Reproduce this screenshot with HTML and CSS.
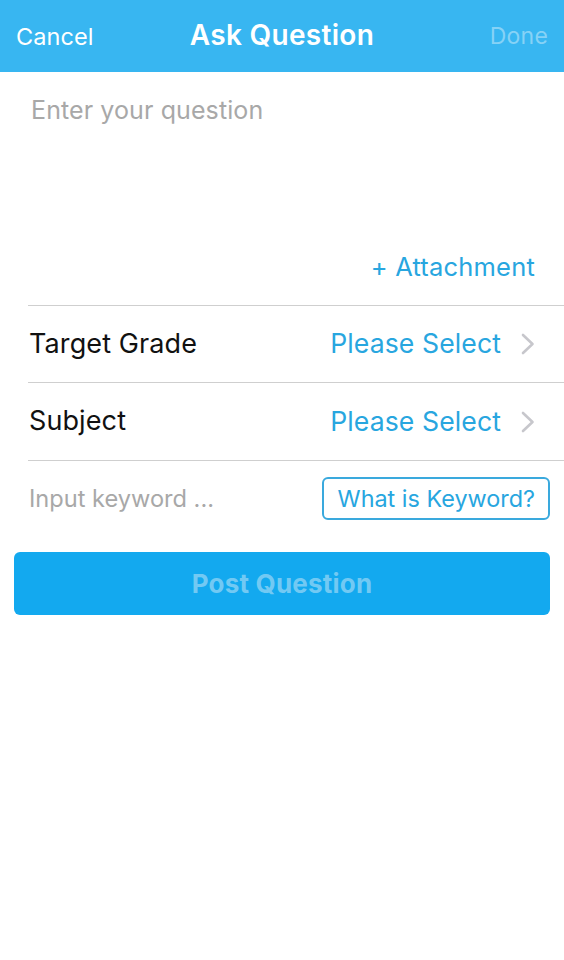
FILE: index.html
```html
<!DOCTYPE html>
<html>
<head>
<meta charset="utf-8">
<link rel="stylesheet" href="styles.css">
</head>
<body>
<div class="screen">
  <header class="navbar">
    <span class="nav-left">Cancel</span>
    <span class="nav-title">Ask Question</span>
    <span class="nav-right">Done</span>
  </header>
  <section class="question">
    <div class="placeholder">Enter your question</div>
    <div class="attach-row"><span class="attach">+ Attachment</span></div>
  </section>
  <section class="list">
    <div class="row">
      <span class="label">Target Grade</span>
      <span class="value">Please Select
        <svg class="chev" width="14" height="22" viewBox="0 0 14 22"><path d="M2 2 L11.5 11 L2 20" fill="none" stroke="#c7c7cc" stroke-width="2.6" stroke-linecap="round" stroke-linejoin="round"/></svg>
      </span>
    </div>
    <div class="row row-tall">
      <span class="label">Subject</span>
      <span class="value">Please Select
        <svg class="chev" width="14" height="22" viewBox="0 0 14 22"><path d="M2 2 L11.5 11 L2 20" fill="none" stroke="#c7c7cc" stroke-width="2.6" stroke-linecap="round" stroke-linejoin="round"/></svg>
      </span>
    </div>
    <div class="row keyword-row">
      <span class="keyword">Input keyword ...</span>
      <span class="kw-btn">What is Keyword?</span>
    </div>
  </section>
  <div class="post-wrap">
    <div class="post-btn">Post Question</div>
  </div>
</div>
</body>
</html>
```
FILE: styles.css
```css
html, body {
  margin: 0;
  padding: 0;
  background: #ffffff;
}
body {
  font-family: Inter, "Noto Sans", "Liberation Sans", sans-serif;
  width: 564px;
  height: 960px;
  overflow: hidden;
}
.screen {
  display: flex;
  flex-direction: column;
}
.navbar {
  height: 72px;
  background: #38b6f1;
  display: grid;
  grid-template-columns: 1fr auto 1fr;
  align-items: center;
  padding: 0 16px 0 16px;
  box-sizing: border-box;
}
.nav-left {
  color: #ffffff;
  font-size: 23.5px;
  letter-spacing: 0.1px;
  justify-self: start;
}
.nav-title {
  color: #ffffff;
  font-size: 28px;
  font-weight: 600;
  letter-spacing: 0.3px;
  margin-top: -2px;
}
.nav-right {
  color: #86d2f6;
  font-size: 23px;
  letter-spacing: 0.2px;
  justify-self: end;
}
.question {
  height: 233px;
  display: flex;
  flex-direction: column;
  justify-content: space-between;
  padding: 23px 29px 23px 31px;
  box-sizing: border-box;
}
.placeholder {
  color: #a8a8a8;
  font-size: 25px;
  letter-spacing: 0.1px;
}
.attach-row {
  display: flex;
  justify-content: flex-end;
}
.attach {
  color: #28a6df;
  font-size: 25.5px;
  letter-spacing: 0.2px;
}
.list {
  margin-left: 28px;
}
.row {
  height: 77px;
  box-sizing: border-box;
  border-top: 1px solid #cfcfcf;
  display: flex;
  align-items: center;
  justify-content: space-between;
  padding: 0 29px 0 1px;
}
.row-tall {
  height: 78px;
}
.label {
  color: #111111;
  font-size: 27px;
  letter-spacing: 0.1px;
  margin-top: -2px;
}
.value {
  color: #28a6df;
  font-size: 26.6px;
  letter-spacing: 0.1px;
  display: flex;
  align-items: center;
  margin-top: -2px;
}
.chev {
  margin-left: 20px;
  margin-top: 2px;
}
.keyword-row {
  height: 76px;
  padding: 0 14px 0 1px;
}
.keyword {
  color: #a8a8a8;
  font-size: 23.6px;
  margin-top: -1px;
}
.kw-btn {
  color: #28a6df;
  font-size: 23.4px;
  border: 2px solid #3aa9dd;
  border-radius: 6px;
  height: 43px;
  box-sizing: border-box;
  padding: 0 13px 0 14px;
  display: flex;
  align-items: center;
}
.post-wrap {
  padding: 16px 14px 0 14px;
}
.post-btn {
  height: 63px;
  background: #13a9ef;
  border-radius: 6px;
  display: flex;
  align-items: center;
  justify-content: center;
  color: #72c9f3;
  font-size: 26px;
  font-weight: 700;
  letter-spacing: 0.2px;
}
```
